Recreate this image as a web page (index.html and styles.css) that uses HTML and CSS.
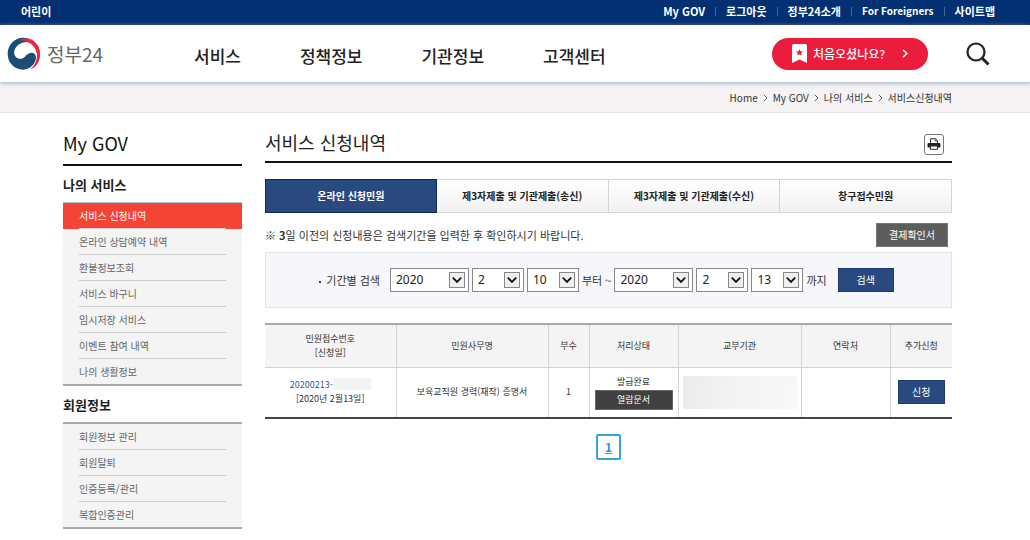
FILE: index.html
```html
<!DOCTYPE html>
<html lang="ko">
<head>
<meta charset="utf-8">
<title>정부24 - 서비스 신청내역</title>
<link rel="stylesheet" href="styles.css">
</head>
<body>
<div class="topbar">
  <a href="#">어린이</a>
  <nav class="util" aria-label="유틸리티">
    <a href="#">My GOV</a>
    <a href="#">로그아웃</a>
    <a href="#">정부24소개</a>
    <a href="#" class="latin">For Foreigners</a>
    <a href="#">사이트맵</a>
  </nav>
</div>

<header class="header">
  <a href="#" class="logo">
    <svg width="34" height="34" viewBox="0 0 102 102" aria-hidden="true">
      <path fill="#f2243f" d="M18 24C30 6 52 0 66 5C88 12 101 31 99 55C97 77 86 91 71 97C84 85 92 69 90 50C87 30 72 15 52 13C37 11 26 16 18 24Z"/>
      <path fill="#1b4d77" d="M54 3C27 -1 2 21 2 51C2 79 24 98 48 98C70 98 87 80 87 61C87 47 73 44 64 50C54 56 50 67 38 65C25 63 20 52 22 42C26 26 42 15 58 15C66 15 74 18 80 23C74 12 64 5 54 3Z"/>
      <path fill="#f2243f" d="M36 10C52 1 72 4 84 17C94 28 99 40 99 55C97 77 86 91 71 97C84 85 92 69 90 50C86 26 64 8 36 10Z"/>
    </svg>
    <span>정부24</span>
  </a>
  <nav class="gnb" aria-label="주 메뉴">
    <a href="#">서비스</a>
    <a href="#">정책정보</a>
    <a href="#">기관정보</a>
    <a href="#">고객센터</a>
  </nav>
  <a href="#" class="first-visit">
    <svg width="15" height="19" viewBox="0 0 15 19" aria-hidden="true"><path fill="#fff" d="M2 0H13Q15 0 15 2V19L7.500 15.500L0 19V2Q0 0 2 0Z"/><path fill="#ec1c3c" d="M7.500 5L8.500 7.200L11 7.400L9.200 9L9.700 11.400L7.500 10.200L5.300 11.400L5.800 9L4 7.400L6.500 7.200Z"/></svg>
    <span>처음오셨나요?</span>
    <svg class="go" width="6" height="9" viewBox="0 0 6 9" aria-hidden="true"><path d="M1 .8L4.800 4.500L1 8.200" fill="none" stroke="#fff" stroke-width="1.500"/></svg>
  </a>
  <button type="button" class="search-open" aria-label="검색 열기">
    <svg width="24" height="24" viewBox="0 0 24 24" aria-hidden="true"><circle cx="10" cy="10" r="8.500" fill="none" stroke="#222" stroke-width="2.200"/><path d="M16 16L22.500 22.500" stroke="#222" stroke-width="3"/></svg>
  </button>
</header>

<nav class="crumbs" aria-label="현재 위치">
  <a href="#">Home</a>
  <svg width="5" height="8" viewBox="0 0 5 8" aria-hidden="true"><path d="M.8 .8L4 4L.8 7.200"/></svg>
  <a href="#">My GOV</a>
  <svg width="5" height="8" viewBox="0 0 5 8" aria-hidden="true"><path d="M.8 .8L4 4L.8 7.200"/></svg>
  <a href="#">나의 서비스</a>
  <svg width="5" height="8" viewBox="0 0 5 8" aria-hidden="true"><path d="M.8 .8L4 4L.8 7.200"/></svg>
  <a href="#">서비스신청내역</a>
</nav>

<div class="page">
  <aside class="side">
    <h2 class="side-title">My GOV</h2>
    <h3 class="side-head">나의 서비스</h3>
    <ul class="side-list side-list-first">
      <li class="on"><a href="#">서비스 신청내역</a></li>
      <li><a href="#">온라인 상담예약 내역</a></li>
      <li><a href="#">환불정보조회</a></li>
      <li><a href="#">서비스 바구니</a></li>
      <li><a href="#">임시저장 서비스</a></li>
      <li><a href="#">이벤트 참여 내역</a></li>
      <li><a href="#">나의 생활정보</a></li>
    </ul>
    <h3 class="side-head">회원정보</h3>
    <ul class="side-list">
      <li><a href="#">회원정보 관리</a></li>
      <li><a href="#">회원탈퇴</a></li>
      <li><a href="#">인증등록/관리</a></li>
      <li><a href="#">복합인증관리</a></li>
    </ul>
  </aside>

  <main class="content">
    <div class="title-row">
      <h1>서비스 신청내역</h1>
      <button type="button" class="print" aria-label="인쇄">
        <svg width="14" height="12" viewBox="0 0 14 12" aria-hidden="true"><path d="M3.500 6V.7H8.500L10.500 2.700V6" fill="#fff" stroke="#333"/><path d="M8.200 .5V3H10.800" fill="none" stroke="#333" stroke-width=".8"/><rect x=".5" y="5" width="13" height="4.500" rx="1" fill="#222"/><rect x="3.500" y="8" width="7" height="3.300" fill="#fff" stroke="#333"/></svg>
      </button>
    </div>

    <nav class="tabs" aria-label="신청 구분">
      <a href="#" class="on">온라인 신청민원</a>
      <a href="#">제3자제출 및 기관제출(송신)</a>
      <a href="#">제3자제출 및 기관제출(수신)</a>
      <a href="#">창구접수민원</a>
    </nav>

    <div class="notice">
      <p>※ <b>3</b>일 이전의 신청내용은 검색기간을 입력한 후 확인하시기 바랍니다.</p>
      <button type="button" class="btn btn-gray">결제확인서</button>
    </div>

    <form class="search">
      <span class="label">기간별 검색</span>
      <span class="select year"><select aria-label="시작 연도"><option>2020</option></select><svg viewBox="0 0 15 15" aria-hidden="true"><path d="M3 5L7.500 9.500L12 5"/></svg></span>
      <span class="select"><select aria-label="시작 월"><option>2</option></select><svg viewBox="0 0 15 15" aria-hidden="true"><path d="M3 5L7.500 9.500L12 5"/></svg></span>
      <span class="select"><select aria-label="시작 일"><option>10</option></select><svg viewBox="0 0 15 15" aria-hidden="true"><path d="M3 5L7.500 9.500L12 5"/></svg></span>
      <span class="word">부터 ~</span>
      <span class="select year"><select aria-label="종료 연도"><option>2020</option></select><svg viewBox="0 0 15 15" aria-hidden="true"><path d="M3 5L7.500 9.500L12 5"/></svg></span>
      <span class="select"><select aria-label="종료 월"><option>2</option></select><svg viewBox="0 0 15 15" aria-hidden="true"><path d="M3 5L7.500 9.500L12 5"/></svg></span>
      <span class="select"><select aria-label="종료 일"><option>13</option></select><svg viewBox="0 0 15 15" aria-hidden="true"><path d="M3 5L7.500 9.500L12 5"/></svg></span>
      <span class="word">까지</span>
      <button type="button" class="btn btn-blue btn-search">검색</button>
    </form>

    <table class="list">
      <colgroup><col class="c-no"><col class="c-name"><col class="c-count"><col class="c-state"><col class="c-org"><col class="c-tel"><col class="c-add"></colgroup>
      <thead>
        <tr><th>민원접수번호<br>[신청일]</th><th>민원사무명</th><th>부수</th><th>처리상태</th><th>교부기관</th><th>연락처</th><th>추가신청</th></tr>
      </thead>
      <tbody>
        <tr>
          <td><div class="number"><a href="#">20200213-</a><span class="mask"></span></div>[2020년 2월13일]</td>
          <td>보육교직원 경력(재작) 증명서</td>
          <td>1</td>
          <td class="state">발급완료<button type="button" class="view">열람문서</button></td>
          <td class="org"><div class="mask-block"></div></td>
          <td></td>
          <td><button type="button" class="btn btn-blue btn-apply">신청</button></td>
        </tr>
      </tbody>
    </table>

    <nav class="paging" aria-label="페이지"><a href="#" aria-current="page">1</a></nav>
  </main>
</div>
</body>
</html>
```
FILE: styles.css
```css
* { box-sizing: border-box; }
body {
  margin: 0;
  background: #fff;
  color: #333;
  font-family: "Noto Sans CJK KR", sans-serif;
  font-size: 10px;
  line-height: 14px;
}
a { color: inherit; text-decoration: none; }
h1, h2, h3, p, ul { margin: 0; padding: 0; }
ul { list-style: none; }
button, select { font: inherit; margin: 0; }

.topbar {
  display: flex;
  justify-content: space-between;
  height: 25px;
  padding: 3px 35px 0 21px;
  background: #032f73;
  border-bottom: 1px solid #02205a;
  color: #fff;
  font-size: 11px;
  font-weight: 700;
  line-height: 16px;
}
.util { display: flex; }
.util a { display: flex; align-items: center; height: 16px; }
.util a + a::before {
  content: "";
  width: 1px;
  height: 9px;
  margin: 0 10px;
  background: #44659a;
}
.util .latin { font-size: 10px; }

.header {
  display: flex;
  align-items: center;
  position: relative;
  height: 58px;
  padding: 0 40px 0 7px;
  border-bottom: 1px solid #c3cadb;
  box-shadow: 0 1px 4px #b4bfd4;
}
.logo {
  display: flex;
  align-items: center;
  gap: 6px;
  width: 187px;
  color: #666;
  font-size: 19px;
  line-height: 28px;
}
.gnb {
  display: flex;
  gap: 59px;
  flex: 1;
  padding-top: 4px;
  color: #222;
  font-size: 17px;
  font-weight: 500;
  line-height: 24px;
}
.first-visit {
  display: flex;
  align-items: center;
  gap: 6px;
  width: 156px;
  height: 32px;
  margin-right: 38px;
  padding: 0 20px;
  border-radius: 16px;
  background: #ec1c3c;
  color: #fff;
  font-size: 12px;
  font-weight: 500;
}
.first-visit .go { margin-left: auto; }
.search-open {
  display: flex;
  padding: 0;
  border: 0;
  background: none;
}

.crumbs {
  display: flex;
  align-items: center;
  justify-content: flex-end;
  gap: 5px;
  height: 30px;
  padding-right: 78px;
  background: #f5f3f4;
  border-bottom: 1px solid #e6e4e5;
}
.crumbs path { fill: none; stroke: #666; }

.page {
  display: flex;
  gap: 23px;
  padding: 0 78px 0 63px;
}
.side { flex: 0 0 179px; padding-top: 17px; }
.side-title {
  height: 36px;
  border-bottom: 2px solid #111;
  color: #111;
  font-size: 18px;
  font-weight: 400;
  line-height: 26px;
}
.side-head {
  height: 36px;
  color: #222;
  font-size: 13px;
  font-weight: 700;
  line-height: 38px;
}
.side-list {
  border-top: 2px solid #aaa;
  border-bottom: 2px solid #aaa;
  background: #f4f4f4;
  color: #666;
}
.side-list-first { border-top: 1px solid #a9c9cc; }
.side-list a { display: block; padding: 0 16px; line-height: 25px; }
.side-list a::after {
  content: "";
  display: block;
  height: 1px;
  background: #ccc;
}
.side-list .on { background: #f54336; color: #fff; }
.side-list li:last-child a::after { height: 0; }

.content { flex: 1; min-width: 0; padding-top: 15px; }
.title-row {
  display: flex;
  align-items: center;
  justify-content: space-between;
  height: 35px;
  padding: 0 8px 6px 0;
  border-bottom: 2px solid #111;
}
.title-row h1 {
  color: #222;
  font-size: 18px;
  font-weight: 400;
  line-height: 26px;
}
.print {
  display: grid;
  place-items: center;
  width: 20px;
  height: 21px;
  margin-top: 5px;
  padding: 0;
  border: 1px solid #777;
  border-radius: 3px;
  background: #fff;
}

.tabs {
  display: grid;
  grid-template-columns: repeat(4, 1fr);
  margin-top: 16px;
  color: #222;
  font-weight: 700;
  text-align: center;
}
.tabs a {
  height: 34px;
  border: 1px solid #d5d5d5;
  border-left-width: 0;
  background: linear-gradient(#fff, #f1f1f1);
  line-height: 31px;
}
.tabs .on {
  border: 1px solid #102c5c;
  background: #29497f;
  color: #fff;
}

.notice {
  display: flex;
  align-items: center;
  justify-content: space-between;
  height: 39px;
  padding: 5px 4px 0 0;
  font-size: 11px;
}
.btn {
  height: 24px;
  padding: 0;
  border: 1px solid;
  color: #fff;
  font-size: 10px;
  line-height: 14px;
}
.btn-gray { width: 72px; background: #5d5d5d; border-color: #777; }
.btn-blue { background: #29497f; border-color: #1c3b73; }
.btn-search { width: 56px; margin-left: 8px; }
.btn-apply { width: 47px; }

.search {
  display: flex;
  align-items: center;
  justify-content: center;
  gap: 3px;
  height: 56px;
  padding-right: 4px;
  border: 1px solid #e3e3eb;
  background: #f7f7fb;
  font-size: 11px;
}
.search .label { margin-right: 7px; }
.search .label::before {
  content: "";
  display: inline-block;
  width: 2px;
  height: 2px;
  margin-right: 5px;
  background: #444;
  vertical-align: middle;
}
.select { position: relative; width: 52px; height: 24px; }
.select.year { width: 79px; }
.select select {
  width: 100%;
  height: 100%;
  padding: 0 5px;
  border: 1px solid #888;
  border-radius: 0;
  background: #fff;
  color: #222;
  font-family: "Noto Sans", sans-serif;
  font-size: 12px;
  appearance: none;
}
.select svg {
  position: absolute;
  top: 4px;
  right: 4px;
  width: 16px;
  height: 16px;
  border: 1px solid #888;
  background: #f0f0f0;
  pointer-events: none;
}
.select path { fill: none; stroke: #111; stroke-width: 2; }

.list {
  width: 100%;
  margin-top: 15px;
  border-collapse: collapse;
  border-top: 2px solid #aaa;
  border-bottom: 2px solid #444;
  table-layout: fixed;
  font-size: 9px;
  text-align: center;
}
.c-no { width: 131px; }
.c-name { width: 152px; }
.c-count { width: 41px; }
.c-state { width: 89px; }
.c-org { width: 123px; }
.c-tel { width: 89px; }
.c-add { width: 62px; }
.list th, .list td {
  padding: 0;
  border-left: 1px solid #d3d3d3;
}
.list th:first-child, .list td:first-child { border-left: 0; }
.list th {
  height: 43px;
  border-bottom: 1px solid #d3d3d3;
  background: #f4f4f4;
  font-weight: 400;
}
.list td { height: 51px; }
.number { display: flex; justify-content: center; }
.number a { color: #1f62a8; }
.mask { width: 38px; height: 12px; background: #f3f4f5; }
.list .state { padding: 0 5px; }
.view {
  display: block;
  width: 100%;
  height: 20px;
  margin-top: 1px;
  padding: 0;
  border: 1px solid #666;
  background: #404040;
  color: #fff;
  line-height: 14px;
}
.list .org { padding: 0 4px; }
.mask-block { height: 33px; background: linear-gradient(100deg, #ebebeb, #f4f4f4 50%, #f8f8f8); }

.paging { display: flex; justify-content: center; margin-top: 15px; }
.paging a {
  width: 25px;
  height: 26px;
  border: 2px solid #35a3e8;
  border-radius: 2px;
  color: #2794dc;
  font-size: 12px;
  font-weight: 700;
  line-height: 21px;
  text-align: center;
  text-decoration: underline;
}
```
